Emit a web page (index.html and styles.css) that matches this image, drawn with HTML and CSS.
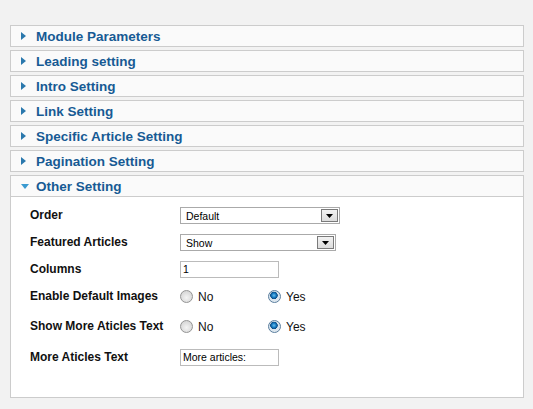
FILE: index.html
```html
<!DOCTYPE html>
<html>
<head>
<meta charset="utf-8">
<link rel="stylesheet" href="styles.css">
</head>
<body>
<div class="page">
  <section class="panel">
    <div class="panel-head"><svg class="arrow" width="5" height="8" viewBox="0 0 5 8"><path d="M0 0L5 4L0 8Z"/></svg><span class="title">Module Parameters</span></div>
  </section>
  <section class="panel">
    <div class="panel-head"><svg class="arrow" width="5" height="8" viewBox="0 0 5 8"><path d="M0 0L5 4L0 8Z"/></svg><span class="title">Leading setting</span></div>
  </section>
  <section class="panel">
    <div class="panel-head"><svg class="arrow" width="5" height="8" viewBox="0 0 5 8"><path d="M0 0L5 4L0 8Z"/></svg><span class="title">Intro Setting</span></div>
  </section>
  <section class="panel">
    <div class="panel-head"><svg class="arrow" width="5" height="8" viewBox="0 0 5 8"><path d="M0 0L5 4L0 8Z"/></svg><span class="title">Link Setting</span></div>
  </section>
  <section class="panel">
    <div class="panel-head"><svg class="arrow" width="5" height="8" viewBox="0 0 5 8"><path d="M0 0L5 4L0 8Z"/></svg><span class="title">Specific Article Setting</span></div>
  </section>
  <section class="panel">
    <div class="panel-head"><svg class="arrow" width="5" height="8" viewBox="0 0 5 8"><path d="M0 0L5 4L0 8Z"/></svg><span class="title">Pagination Setting</span></div>
  </section>
  <section class="panel panel--open">
    <div class="panel-head panel-head--open"><svg class="arrow arrow--down" width="8" height="5" viewBox="0 0 8 5"><path d="M0 0L8 0L4 5Z"/></svg><span class="title">Other Setting</span></div>
    <div class="panel-body">
      <div class="row">
        <span class="label">Order</span>
        <div class="select select--order"><span class="select-text">Default</span><span class="select-btn"><svg width="7" height="4" viewBox="0 0 7 4"><path d="M0 0L7 0L3.5 4Z"/></svg></span></div>
      </div>
      <div class="row">
        <span class="label">Featured Articles</span>
        <div class="select select--featured"><span class="select-text">Show</span><span class="select-btn"><svg width="7" height="4" viewBox="0 0 7 4"><path d="M0 0L7 0L3.5 4Z"/></svg></span></div>
      </div>
      <div class="row">
        <span class="label">Columns</span>
        <div class="textbox">1</div>
      </div>
      <div class="row">
        <span class="label">Enable Default Images</span>
        <div class="radios">
          <span class="radio-opt"><span class="radio"></span>No</span>
          <span class="radio-opt"><span class="radio radio--on"></span>Yes</span>
        </div>
      </div>
      <div class="row row--more">
        <span class="label">Show More Aticles Text</span>
        <div class="radios">
          <span class="radio-opt"><span class="radio"></span>No</span>
          <span class="radio-opt"><span class="radio radio--on"></span>Yes</span>
        </div>
      </div>
      <div class="row row--last">
        <span class="label">More Aticles Text</span>
        <div class="textbox">More articles:</div>
      </div>
    </div>
  </section>
</div>
</body>
</html>
```

FILE: styles.css
```css
html, body {
  margin: 0;
  padding: 0;
  background: #f2f2f2;
}
body {
  font-family: "Liberation Sans", Arial, sans-serif;
  width: 533px;
  height: 409px;
  overflow: hidden;
}
.page {
  padding: 25px 9px 0 10px;
  display: flex;
  flex-direction: column;
  gap: 3px;
}
.panel {
  border: 1px solid #cccccc;
  background: #fafafa;
}
.panel-head {
  height: 20px;
  display: flex;
  align-items: center;
  padding-left: 10px;
}
.panel-head--open {
  border-bottom: 1px solid #cccccc;
}
.arrow {
  fill: #2a78ad;
  width: 5px;
  margin-right: 10px;
  flex: none;
}
.arrow--down {
  fill: #3a9ad0;
  width: 8px;
  margin-right: 7px;
  margin-left: 0;
}
.title {
  font-size: 13.5px;
  font-weight: bold;
  color: #175a94;
  line-height: 20px;
  padding-top: 1px;
}
.panel-body {
  background: #ffffff;
  height: 200px;
  box-sizing: border-box;
  padding: 10px 0 0 19px;
  display: flex;
  flex-direction: column;
  gap: 10px;
}
.row {
  display: flex;
  align-items: center;
  height: 17px;
}
.row--more {
  margin-top: 3px;
}
.row--last {
  margin-top: 4px;
}
.label {
  width: 150px;
  flex: none;
  font-size: 12px;
  font-weight: bold;
  color: #111111;
  position: relative;
  top: -1px;
}
.select {
  height: 17px;
  box-sizing: border-box;
  border: 1px solid #aaaaaa;
  background: #ffffff;
  display: flex;
  align-items: center;
  justify-content: space-between;
  padding: 0 1px 0 5px;
}
.select--order { width: 160px; }
.select--featured { width: 156px; }
.select-text {
  font-size: 10.5px;
  color: #000;
}
.select-btn {
  width: 17px;
  height: 13px;
  box-sizing: border-box;
  border: 1px solid #7a7a7a;
  background: linear-gradient(#f2f2f2, #dcdcdc);
  display: flex;
  align-items: center;
  justify-content: center;
  padding-top: 1px;
}
.select-btn svg {
  fill: #000;
}
.textbox {
  width: 99px;
  height: 17px;
  box-sizing: border-box;
  border: 1px solid #bbbbbb;
  background: #ffffff;
  font-size: 10.5px;
  line-height: 15px;
  padding-left: 2px;
  color: #000;
}
.radios {
  display: flex;
}
.radio-opt {
  width: 88px;
  display: flex;
  align-items: center;
  gap: 5px;
  font-size: 12px;
  color: #111;
}
.radio {
  width: 13px;
  height: 13px;
  box-sizing: border-box;
  border-radius: 50%;
  border: 1px solid #949494;
  background: radial-gradient(circle at 50% 60%, #f4f4f4 0, #dcdcdc 60%, #cfcfcf 100%);
  flex: none;
}
.radio--on {
  border-color: #5a7e9e;
  background: radial-gradient(circle at 45% 40%, #6cc0f0 0, #1a7fc4 2px, #0a4c86 3.5px, #d8e3ec 4px, #e6eef4 100%);
}
```
